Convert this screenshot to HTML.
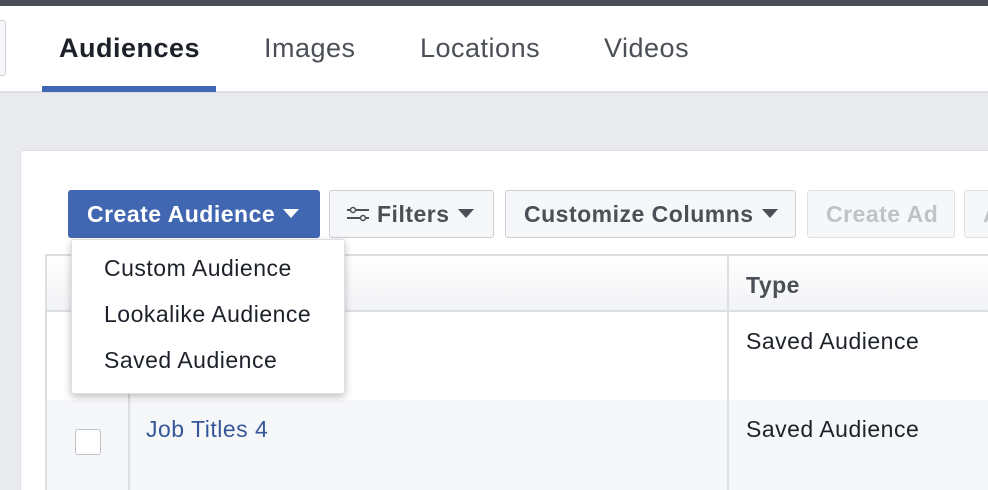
<!DOCTYPE html>
<html><head><style>
*{margin:0;padding:0;box-sizing:border-box}
html,body{width:988px;height:490px;overflow:hidden}
body{background:#e9eaed;font-family:"Liberation Sans",Arial,sans-serif;position:relative}
.abs{position:absolute}
.tab{position:absolute;top:33px;font-size:27px;letter-spacing:0.5px;color:#4b4f56}
.btn{position:absolute;top:190px;height:48px;border:1px solid #ced0d4;background:#f6f7f9;border-radius:3px;font-weight:bold;font-size:23px;letter-spacing:0.5px;color:#4b4f56;line-height:46px;padding-left:18px;white-space:nowrap;overflow:hidden}
.car{display:inline-block;width:0;height:0;border-left:8px solid transparent;border-right:8px solid transparent;border-top:9px solid currentColor;vertical-align:middle;margin-left:8px;position:relative;top:-2px}
.dd{font-size:23px;letter-spacing:0.5px;color:#1d2129;position:absolute;left:104px}
.cell{position:absolute;font-size:23px;letter-spacing:0.5px;color:#1d2129}
</style></head><body>
<div class="abs" style="left:0;top:0;width:988px;height:6px;background:#4b4f56"></div>
<div class="abs" style="left:0;top:6px;width:988px;height:87px;background:#fff;border-bottom:2px solid #dddfe2"></div>
<div class="abs" style="left:-6px;top:20px;width:12px;height:56px;border:1px solid #ccd0d5;border-radius:3px;background:#f6f7f9"></div>
<div class="tab" style="left:59px;font-weight:bold;color:#1d2129">Audiences</div>
<div class="tab" style="left:264px">Images</div>
<div class="tab" style="left:420px">Locations</div>
<div class="tab" style="left:604px">Videos</div>
<div class="abs" style="left:42px;top:86px;width:174px;height:6px;background:#4267b2"></div>

<div class="abs" style="left:20px;top:150px;width:980px;height:360px;background:#fff;border:1px solid #dddfe2;border-radius:3px"></div>

<div class="btn" style="left:68px;width:252px;background:#4267b2;border-color:#4267b2;color:#fff">Create Audience<span class="car"></span></div>
<div class="btn" style="left:329px;width:165px;padding-left:17px"><svg width="22" height="16" style="vertical-align:middle;margin-right:8px;position:relative;top:-2px" viewBox="0 0 22 16"><g stroke="#4b4f56" stroke-width="2" fill="none"><line x1="0" y1="4" x2="22" y2="4"/><line x1="0" y1="12" x2="22" y2="12"/></g><circle cx="6" cy="4" r="2.5" fill="#f6f7f9" stroke="#4b4f56" stroke-width="1.5"/><circle cx="16" cy="12" r="2.5" fill="#f6f7f9" stroke="#4b4f56" stroke-width="1.5"/></svg>Filters<span class="car"></span></div>
<div class="btn" style="left:505px;width:291px">Customize Columns<span class="car"></span></div>
<div class="btn" style="left:807px;width:148px;color:#bec3c9;border-color:#dddfe2">Create Ad</div>
<div class="btn" style="left:964px;width:40px;color:#bec3c9;border-color:#dddfe2">A</div>

<div class="abs" style="left:45px;top:254px;width:950px;height:58px;background:linear-gradient(#fff,#f2f3f5);border-top:2px solid #dddfe2;border-left:2px solid #dddfe2;border-bottom:2px solid #dddfe2"></div>
<div class="abs" style="left:45px;top:312px;width:2px;height:178px;background:#dddfe2"></div>
<div class="abs" style="left:47px;top:400px;width:950px;height:90px;background:#f6f7f9"></div>
<div class="abs" style="left:727px;top:255px;width:2px;height:235px;background:#dddfe2"></div>
<div class="abs" style="left:128px;top:312px;width:2px;height:178px;background:#dddfe2"></div>
<div class="cell" style="left:746px;top:272px;font-weight:bold;color:#4b4f56">Type</div>
<div class="cell" style="left:746px;top:328px">Saved Audience</div>
<div class="cell" style="left:746px;top:416px">Saved Audience</div>
<div class="cell" style="left:146px;top:416px;color:#365899">Job Titles 4</div>
<div class="abs" style="left:75px;top:429px;width:26px;height:26px;border:1px solid #bec3c9;border-radius:3px;background:#fff"></div>

<div class="abs" style="left:71px;top:239px;width:274px;height:155px;background:#fff;border:1px solid #dddfe2;border-radius:3px;box-shadow:0 3px 8px rgba(0,0,0,.25)"></div>
<div class="dd" style="top:255px">Custom Audience</div>
<div class="dd" style="top:301px">Lookalike Audience</div>
<div class="dd" style="top:347px">Saved Audience</div>
</body></html>
